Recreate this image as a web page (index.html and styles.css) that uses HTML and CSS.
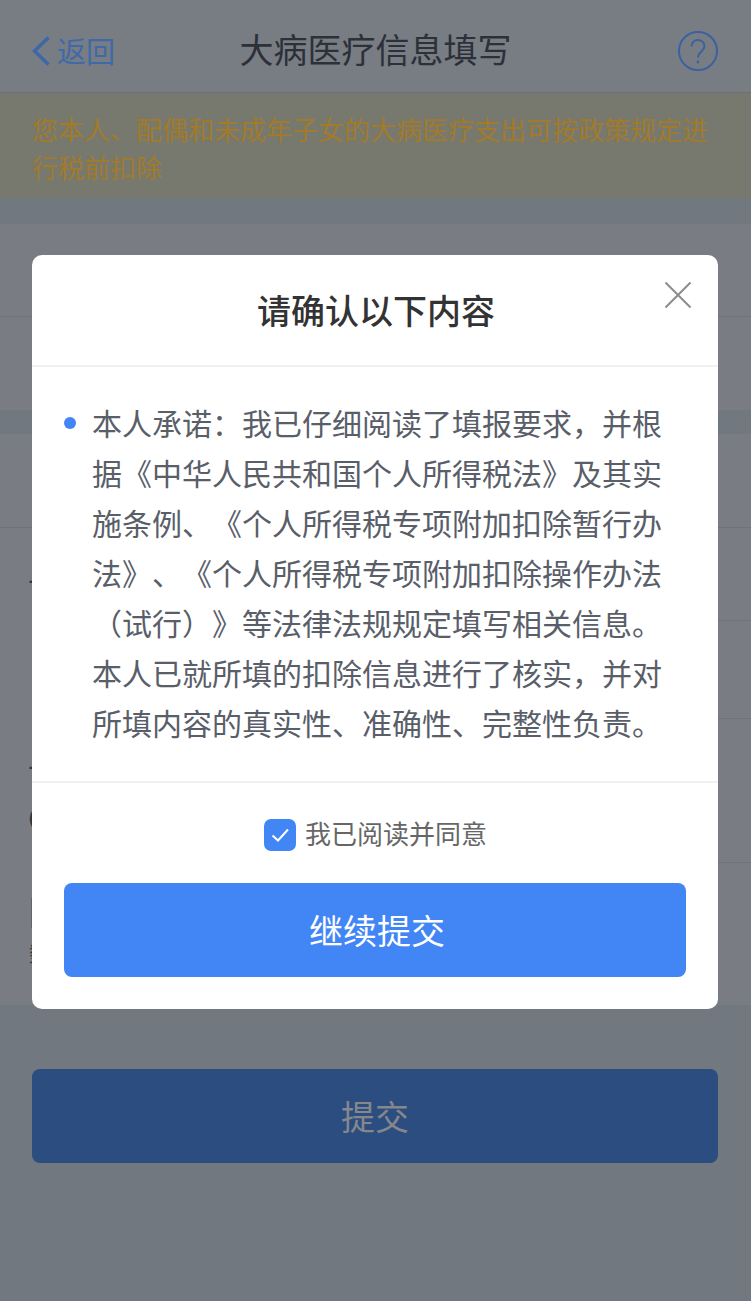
FILE: index.html
```html
<!DOCTYPE html>
<html lang="zh-CN">
<head>
<meta charset="utf-8">
<title>大病医疗信息填写</title>
<link rel="stylesheet" href="styles.css">
</head>
<body>
<div class="page">
  <header class="nav">
    <a class="back">
      <svg class="back-icon" viewBox="0 0 18 30" width="18" height="30"><path d="M16.500 1.500 2.500 15l14 13.500" fill="none" stroke="#3a68a8" stroke-width="3.400"/></svg>
      <span class="back-text">返回</span>
    </a>
    <h1 class="nav-title">大病医疗信息填写</h1>
    <svg class="help" viewBox="0 0 40 40" width="40" height="40">
      <circle cx="20" cy="20" r="19" fill="none" stroke="#3a62a0" stroke-width="2"/>
      <path d="M13.500 15.500c0-4 3-6.500 6.500-6.500s6.500 2.500 6.500 6c0 5.500-6.500 5.500-6.500 11.500" fill="none" stroke="#3a62a0" stroke-width="2"/>
      <circle cx="20" cy="31" r="1.400" fill="#3a62a0"/>
    </svg>
  </header>
  <p class="notice">您本人、配偶和未成年子女的大病医疗支出可按政策规定进行税前扣除</p>

  <section class="group group-first">
    <div class="row row-full"></div>
    <div class="row row-plain"></div>
  </section>

  <section class="group group-second">
    <div class="row row-full row-head"></div>
    <div class="row row-indent row-short"><span class="frag frag-a">十</span></div>
    <div class="row row-indent row-mid"></div>
    <div class="row row-indent row-tall">
      <span class="frag frag-b">十</span>
      <span class="frag frag-c">C</span>
    </div>
    <div class="row row-plain row-last">
      <span class="caret"></span>
      <span class="frag frag-d">数</span>
    </div>
  </section>

  <button class="submit">提交</button>
</div>

<div class="modal">
  <div class="modal-head">
    <h2 class="modal-title">请确认以下内容</h2>
    <svg class="close" viewBox="0 0 28 28" width="28" height="28"><path d="M1.500 1.500l25 25M26.500 1.500l-25 25" fill="none" stroke="#8c8c8c" stroke-width="2"/></svg>
  </div>
  <div class="modal-body">
    <span class="dot"></span>
    <p class="pledge">本人承诺：我已仔细阅读了填报要求，并根据《中华人民共和国个人所得税法》及其实施条例、《个人所得税专项附加扣除暂行办法》、《个人所得税专项附加扣除操作办法（试行）》等法律法规规定填写相关信息。本人已就所填的扣除信息进行了核实，并对所填内容的真实性、准确性、完整性负责。</p>
  </div>
  <div class="modal-foot">
    <label class="agree">
      <span class="check"><svg viewBox="0 0 32 32" width="32" height="32"><path d="M8.500 16.500l5.500 5 10-11" fill="none" stroke="#fff" stroke-width="2"/></svg></span>
      <span class="agree-text">我已阅读并同意</span>
    </label>
    <button class="confirm">继续提交</button>
  </div>
</div>
</body>
</html>
```

FILE: styles.css
```css
* { box-sizing: border-box; }
html, body { margin: 0; padding: 0; }
body {
  width: 751px;
  height: 1301px;
  overflow: hidden;
  background: #72787f;
  font-family: "Noto Sans CJK SC", "Liberation Sans", sans-serif;
  font-feature-settings: "chws" 0, "halt" 0, "palt" 0;
  text-spacing-trim: space-all;
  position: relative;
}
.page { display: flex; flex-direction: column; }

.nav {
  height: 93px;
  border-bottom: 1px solid #6b7075;
  background: #787c83;
  display: flex;
  align-items: center;
  justify-content: space-between;
  padding: 10px 33px 0 32px;
  position: relative;
}
.back {
  display: flex;
  align-items: center;
  gap: 7px;
  color: #3f6aa8;
  font-size: 29px;
  line-height: 40px;
}
.back-text { margin-top: -3px; }
.back-icon { display: block; }
.nav-title {
  position: absolute;
  left: 0;
  right: 0;
  text-align: center;
  margin: 0;
  padding-bottom: 4px;
  font-size: 34px;
  font-weight: 400;
  line-height: 44px;
  color: #2c3038;
}
.help { display: block; }

.notice {
  margin: 0;
  height: 105px;
  padding: 17px 32px 0;
  background: #78796e;
  color: #a17a2a;
  font-size: 26px;
  line-height: 38px;
}

.group { background: #797c82; display: flex; flex-direction: column; }
.group-first { margin-top: 26px; }
.group-second { margin-top: 24px; }

.row { height: 93px; color: #33373d; position: relative; }
.row-full { border-bottom: 1px solid #6f7277; }
.row-head { height: 94px; }
.row-plain { height: 93px; }
.row-indent { padding-left: 28px; }
.row-indent::after {
  content: "";
  position: absolute;
  left: 32px;
  right: 0;
  bottom: 0;
  border-bottom: 1px solid #6f7277;
}
.row-short { height: 93px; padding-top: 36px; }
.row-mid { height: 98px; }
.row-tall { height: 144px; padding-top: 31px; }
.row-last { height: 142px; padding: 35px 0 0 29px; }

.frag { display: block; }
.frag-a, .frag-b { font-size: 28px; line-height: 36px; }
.frag-c { font-size: 32px; line-height: 40px; margin-top: 11px; }
.frag-d { font-size: 20px; line-height: 24px; margin-top: 14px; }
.caret {
  display: block;
  width: 1px;
  height: 30px;
  margin-left: 2px;
  background: #62666b;
}

.submit {
  display: block;
  margin: 64px 0 0 32px;
  width: 686px;
  height: 94px;
  border: 0;
  border-radius: 8px;
  background: #2c4d7f;
  color: #84888d;
  font: 400 34px/44px "Noto Sans CJK SC", "Liberation Sans", sans-serif;
}

.modal {
  position: absolute;
  left: 32px;
  top: 255px;
  width: 686px;
  height: 754px;
  background: #fff;
  border-radius: 10px;
  display: flex;
  flex-direction: column;
}
.modal-head {
  height: 112px;
  border-bottom: 2px solid #f1f1f1;
  display: flex;
  align-items: center;
  justify-content: center;
  position: relative;
  flex: none;
  padding-left: 2px;
}
.modal-title {
  margin: 0;
  font-size: 34px;
  font-weight: 500;
  line-height: 44px;
  color: #333;
}
.close { position: absolute; left: 632px; top: 26px; }

.modal-body {
  flex: none;
  height: 416px;
  border-bottom: 2px solid #f1f1f1;
  padding: 32px 0 0 32px;
  display: flex;
  align-items: flex-start;
}
.dot {
  flex: none;
  width: 12px;
  height: 12px;
  margin-top: 18px;
  border-radius: 50%;
  background: #4285f4;
}
.pledge {
  margin: -2px 0 0 16px;
  width: 571px;
  font-size: 30px;
  line-height: 50px;
  color: #595e69;
}

.modal-foot {
  flex: 1;
  padding: 36px 32px 0;
  display: flex;
  flex-direction: column;
  gap: 32px;
}
.agree {
  display: flex;
  align-items: center;
  justify-content: center;
  gap: 9px;
  height: 32px;
  font-size: 26px;
  color: #666;
  padding-left: 1px;
}
.agree-text { margin-top: -6px; }
.check {
  display: block;
  width: 32px;
  height: 32px;
  border-radius: 7px;
  background: #4285f4;
}
.check svg { display: block; }
.confirm {
  display: block;
  width: 622px;
  height: 94px;
  border: 0;
  padding: 0 0 0 4px;
  border-radius: 8px;
  background: #4285f4;
  color: #fff;
  font: 400 34px/44px "Noto Sans CJK SC", "Liberation Sans", sans-serif;
}
```
